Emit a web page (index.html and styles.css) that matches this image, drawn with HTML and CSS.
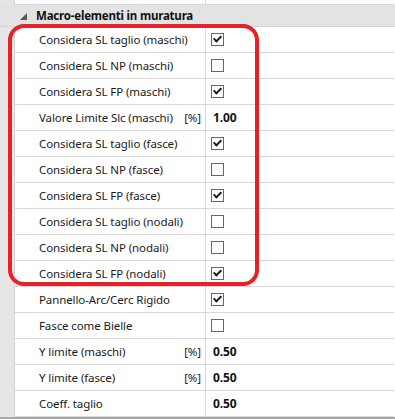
FILE: index.html
```html
<!DOCTYPE html>
<html>
<head>
<meta charset="utf-8">
<link rel="stylesheet" href="styles.css">
</head>
<body>
<div class="grid">
  <div class="row top"><div class="gut"></div><div class="lab"></div><div class="val"></div></div>
  <div class="header">
    <svg class="tri" width="7" height="7" viewBox="0 0 7 7"><path d="M7 0 L7 7 L0 7 Z" fill="#595959"/></svg>
    <span>Macro-elementi in muratura</span>
  </div>
  <div class="row"><div class="gut"></div><div class="lab">Considera SL taglio (maschi)</div><div class="val"><span class="cb on"></span></div></div>
  <div class="row"><div class="gut"></div><div class="lab">Considera SL NP (maschi)</div><div class="val"><span class="cb"></span></div></div>
  <div class="row"><div class="gut"></div><div class="lab">Considera SL FP (maschi)</div><div class="val"><span class="cb on"></span></div></div>
  <div class="row"><div class="gut"></div><div class="lab"><span>Valore Limite Slc (maschi)</span><span>[%]</span></div><div class="val"><b>1.00</b></div></div>
  <div class="row"><div class="gut"></div><div class="lab">Considera SL taglio (fasce)</div><div class="val"><span class="cb on"></span></div></div>
  <div class="row"><div class="gut"></div><div class="lab">Considera SL NP (fasce)</div><div class="val"><span class="cb"></span></div></div>
  <div class="row"><div class="gut"></div><div class="lab">Considera SL FP (fasce)</div><div class="val"><span class="cb on"></span></div></div>
  <div class="row"><div class="gut"></div><div class="lab">Considera SL taglio (nodali)</div><div class="val"><span class="cb"></span></div></div>
  <div class="row"><div class="gut"></div><div class="lab">Considera SL NP (nodali)</div><div class="val"><span class="cb"></span></div></div>
  <div class="row"><div class="gut"></div><div class="lab">Considera SL FP (nodali)</div><div class="val"><span class="cb on"></span></div></div>
  <div class="row"><div class="gut"></div><div class="lab">Pannello-Arc/Cerc Rigido</div><div class="val"><span class="cb on"></span></div></div>
  <div class="row"><div class="gut"></div><div class="lab">Fasce come Bielle</div><div class="val"><span class="cb"></span></div></div>
  <div class="row"><div class="gut"></div><div class="lab"><span>Y limite (maschi)</span><span>[%]</span></div><div class="val"><b>0.50</b></div></div>
  <div class="row"><div class="gut"></div><div class="lab"><span>Y limite (fasce)</span><span>[%]</span></div><div class="val"><b>0.50</b></div></div>
  <div class="row"><div class="gut"></div><div class="lab">Coeff. taglio</div><div class="val"><b>0.50</b></div></div>
  <div class="frame-bottom"></div>
  <div class="highlight"></div>
</div>
</body>
</html>
```
FILE: styles.css
```css
html, body {
  margin: 0;
  padding: 0;
  background: #ffffff;
}
body {
  width: 395px;
  height: 419px;
  overflow: hidden;
  font-family: "Noto Sans", "Open Sans", sans-serif;
  font-size: 11.5px;
  letter-spacing: -0.1px;
  color: #1a1a1a;
}
.grid {
  position: relative;
  width: 395px;
}
.row {
  display: grid;
  grid-template-columns: 15px 191px 188px;
  height: 26px;
}
.row.top {
  height: 5px;
}
.gut {
  background: #e6e6e6;
  border-right: 1px solid #d4d4d4;
}
.lab {
  border-bottom: 1px solid #d9d9d9;
  border-right: 1px solid #d9d9d9;
  padding: 0 4px 0 24px;
  display: flex;
  align-items: center;
  justify-content: space-between;
  white-space: nowrap;
}
.val {
  border-bottom: 1px solid #d9d9d9;
  display: flex;
  align-items: center;
  padding-left: 5px;
}
.val b {
  font-weight: 700;
  padding-left: 2px;
  color: #111;
  font-size: 12px;
}
.header {
  height: 21px;
  background: #e3e3e3;
  border-bottom: 1px solid #d4d4d4;
  display: flex;
  align-items: center;
  font-weight: 700;
  color: #111;
  letter-spacing: -0.2px;
}
.tri {
  margin-left: 20px;
  margin-right: 9px;
  margin-top: 1px;
}
.cb {
  width: 11px;
  height: 11px;
  border: 1px solid #666;
  background: #fff;
  position: relative;
  margin-top: -1px;
}
.cb.on::after {
  content: "";
  position: absolute;
  left: 3px;
  top: 0px;
  width: 3px;
  height: 6px;
  border-right: 2px solid #1a1a1a;
  border-bottom: 2px solid #1a1a1a;
  transform: rotate(45deg);
}
.frame-bottom {
  height: 2px;
  background: #a8a8a8;
}
.highlight {
  position: absolute;
  left: 8px;
  top: 24px;
  width: 243px;
  height: 254px;
  border: 4px solid #e62129;
  border-radius: 16px;
  pointer-events: none;
}
```
